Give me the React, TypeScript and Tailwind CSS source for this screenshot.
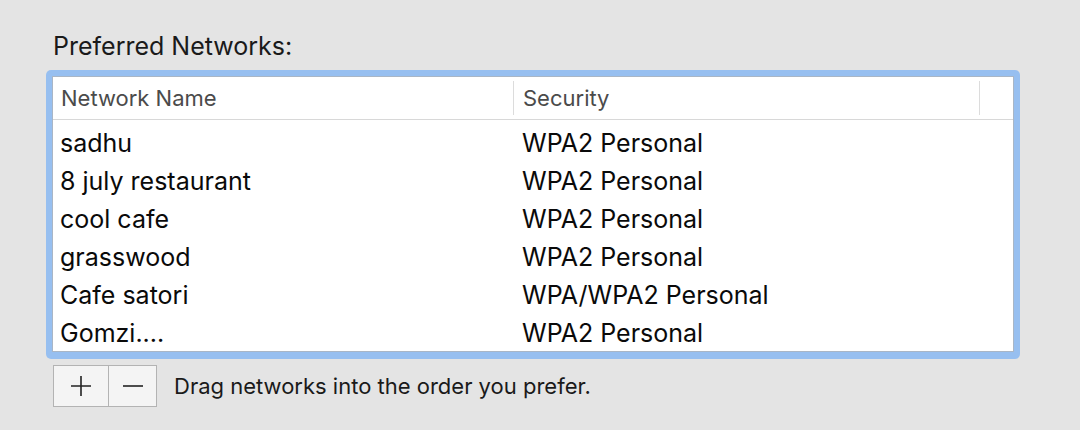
import React from 'react';

const networks = [
  { name: 'sadhu', security: 'WPA2 Personal' },
  { name: '8 july restaurant', security: 'WPA2 Personal' },
  { name: 'cool cafe', security: 'WPA2 Personal' },
  { name: 'grasswood', security: 'WPA2 Personal' },
  { name: 'Cafe satori', security: 'WPA/WPA2 Personal' },
  { name: 'Gomzi....', security: 'WPA2 Personal' },
];

export default function App() {
  return (
    <div
      className="w-[1080px] h-[430px] bg-[#e4e4e4] pt-[31px] pl-[46px] text-black"
      style={{ fontFamily: 'Inter, "Noto Sans", sans-serif' }}
    >
      <div className="pl-[7px] text-[25px] leading-[30px] text-[#1a1a1a]">Preferred Networks:</div>

      {/* list with focus ring */}
      <div className="mt-[9px] w-[974px] rounded-[5px] bg-[#97bff0] p-[6px] pb-[7px]">
        <div className="h-[276px] overflow-hidden bg-white border border-[#a9b6c6]">
          <div className="flex h-[43px] items-center border-b border-[#d8d8d8] text-[22px] text-[#4b4b4b]">
            <div className="w-[460px] pl-[8px]">Network Name</div>
            <div className="h-[34px] w-px bg-[#dcdcdc]" />
            <div className="w-[465px] pl-[9px]">Security</div>
            <div className="h-[34px] w-px bg-[#dcdcdc]" />
          </div>
          <div className="pt-[5px]">
            {networks.map((n) => (
              <div key={n.name} className="flex h-[38px] items-center text-[25px] text-[#0a0a0a]">
                <div className="w-[461px] pl-[7px]">{n.name}</div>
                <div className="pl-[8px]">{n.security}</div>
              </div>
            ))}
          </div>
        </div>
      </div>

      {/* add / remove */}
      <div className="mt-[6px] ml-[7px] flex items-center">
        <div className="flex h-[42px] border border-[#b3b3b3] bg-[#f4f4f4]">
          <button className="flex w-[55px] items-center justify-center border-r border-[#b3b3b3]">
            <svg width="22" height="22" viewBox="0 0 22 22">
              <path d="M11 1v20M1 11h20" stroke="#222" strokeWidth="1.6" />
            </svg>
          </button>
          <button className="flex w-[47px] items-center justify-center">
            <svg width="24" height="22" viewBox="0 0 24 22">
              <path d="M2 11h20" stroke="#222" strokeWidth="1.6" />
            </svg>
          </button>
        </div>
        <div className="ml-[17px] text-[22px] text-[#1a1a1a]">Drag networks into the order you prefer.</div>
      </div>
    </div>
  );
}
